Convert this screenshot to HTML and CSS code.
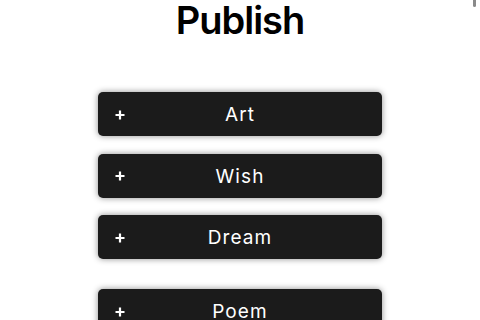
FILE: index.html
```html
<!DOCTYPE html>
<html>
<head>
<meta charset="utf-8">
<link rel="stylesheet" href="styles.css">
</head>
<body>
<div class="scroll-indicator"></div>
<main class="page">
  <h1 class="title">Publish</h1>
  <div class="group">
    <button class="item"><span class="plus"><svg width="10" height="10" viewBox="0 0 10 10"><path d="M5 0.5V9.5M0.5 5H9.5" stroke="#fff" stroke-width="2.2"/></svg></span><span class="label">Art</span></button>
    <button class="item"><span class="plus"><svg width="10" height="10" viewBox="0 0 10 10"><path d="M5 0.5V9.5M0.5 5H9.5" stroke="#fff" stroke-width="2.2"/></svg></span><span class="label">Wish</span></button>
    <button class="item"><span class="plus"><svg width="10" height="10" viewBox="0 0 10 10"><path d="M5 0.5V9.5M0.5 5H9.5" stroke="#fff" stroke-width="2.2"/></svg></span><span class="label">Dream</span></button>
  </div>
  <div class="group group-second">
    <button class="item"><span class="plus"><svg width="10" height="10" viewBox="0 0 10 10"><path d="M5 0.5V9.5M0.5 5H9.5" stroke="#fff" stroke-width="2.2"/></svg></span><span class="label">Poem</span></button>
  </div>
</main>
</body>
</html>
```
FILE: styles.css
```css
html, body {
  margin: 0;
  padding: 0;
  background: #fff;
  overflow: hidden;
}
body {
  font-family: Inter, "Noto Sans", sans-serif;
  width: 480px;
  height: 320px;
  position: relative;
}
.scroll-indicator {
  position: absolute;
  top: 0;
  right: 4px;
  width: 3px;
  height: 7px;
  border-radius: 0 0 2px 2px;
  background: #8a8a8a;
}
.page {
  display: flex;
  flex-direction: column;
  align-items: center;
}
.title {
  margin: 0;
  font-size: 38px;
  font-weight: 600;
  line-height: 40px;
  letter-spacing: -1px;
  color: #000;
}
.group {
  display: flex;
  flex-direction: column;
  gap: 17.5px;
  width: 284px;
  margin-top: 52px;
}
.group-second {
  margin-top: 30px;
}
.item {
  display: flex;
  align-items: center;
  height: 44px;
  padding: 1px 0 0 17px;
  border: none;
  border-radius: 5px;
  background: #1b1b1b;
  box-shadow: 0 0 6px rgba(0,0,0,0.45);
  color: #fff;
  font-family: Inter, "Noto Sans", sans-serif;
  font-size: 19px;
  font-weight: 400;
  letter-spacing: 1.1px;
}
.plus {
  display: flex;
  width: 10px;
  height: 10px;
}
.label {
  flex: 1;
  text-align: center;
  margin-right: 27px;
}
```
